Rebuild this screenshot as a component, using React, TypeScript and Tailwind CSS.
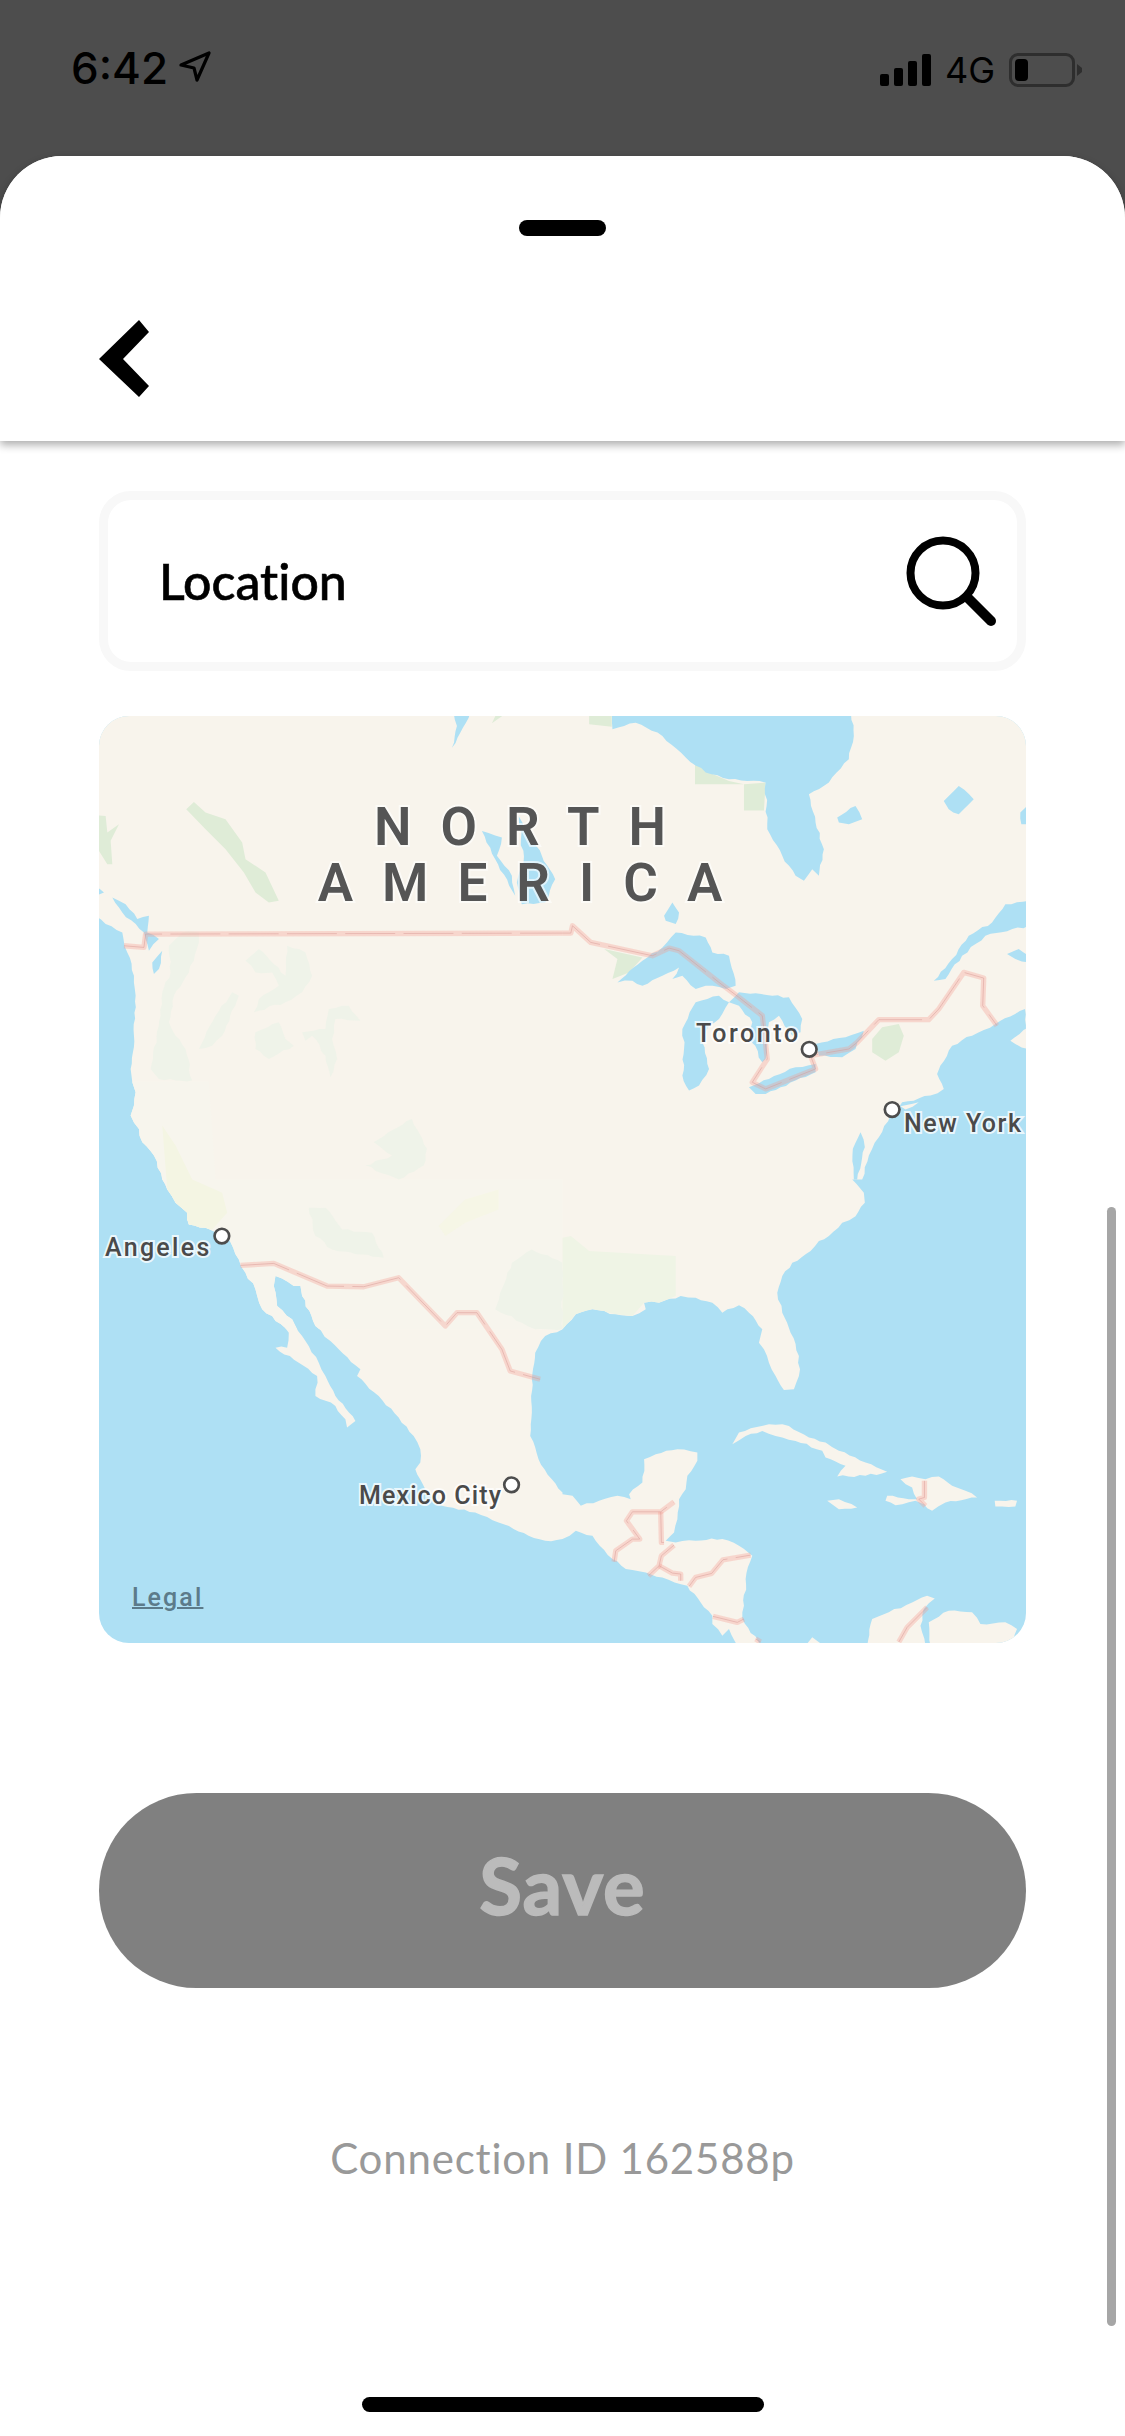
import React from "react";

const OFF: Record<string, [number, number]> = { a: [0, 0], b: [1392, 0], c: [0, 1392], d: [1392, 1392] };
const q = (k: string, s: string) =>
  s
    .trim()
    .split(/\s+/)
    .map((p) => {
      const [x, y] = p.split(",").map(Number);
      return `${x + OFF[k][0]},${y + OFF[k][1]}`;
    })
    .join(" ");

/* serrates a coastline a little, the way the low-zoom map tiles look */
const jag = (s: string) => {
  const pts = s
    .trim()
    .split(/\s+/)
    .map((p) => p.split(",").map(Number));
  const out: string[] = [];
  let seed = 7;
  const rnd = () => {
    seed = (seed * 9301 + 49297) % 233280;
    return seed / 233280 - 0.5;
  };
  pts.forEach((p, i) => {
    const n = pts[(i + 1) % pts.length];
    out.push(`${p[0]},${p[1]}`);
    const dx = n[0] - p[0];
    const dy = n[1] - p[1];
    const len = Math.hypot(dx, dy);
    if (len > 2000) return;
    const steps = Math.floor(len / 16);
    for (let t = 1; t < steps; t++) {
      const f = t / steps;
      const o = rnd() * 7;
      out.push(`${(p[0] + dx * f - (dy / len) * o).toFixed(1)},${(p[1] + dy * f + (dx / len) * o).toFixed(1)}`);
    }
  });
  return out.join(" ");
};

const LAND = jag(
  [
    "-30,-30 2820,-30 2820,1947",
    q("b", "1389,880 1300,925 1230,960 1170,990 1135,1050 1125,1075 1145,1120 1105,1140 1020,1160 985,1200 950,1265 920,1320 900,1392"),
    q("d", "870,0 905,40 908,70 880,110 840,130 800,170 770,185 745,215 690,250 660,290 645,340 660,400 685,460 710,530 710,590 695,630 665,632 640,590 620,550 605,510 590,490 600,450 560,400 530,378 480,400 450,370 400,355 355,350 290,370 245,370 250,390 210,410 160,405 90,390 40,405 0,450"),
    q("c", "1340,470 1310,520 1300,600 1300,700 1295,770 1320,840 1360,900 1392,940"),
    q("d", "0,945 30,950 55,980 110,965 165,950 205,960 200,945 240,910 245,840 280,825 345,810 405,820 405,845 375,890 370,930 350,960 345,1020 335,1060 310,1085 340,1090 400,1085 480,1080 530,1100 570,1130 550,1200 545,1280 540,1320 595,1400 525,1400 500,1350 480,1370 450,1335 450,1310 415,1270 375,1220 300,1195 250,1180 190,1170 150,1140 90,1070 40,1055 0,1080"),
    q("c", "1340,1085 1290,1070 1200,1030 1130,1000 1030,980 980,930 950,870 965,850 965,810 945,770 900,715 840,650 775,590 785,570 720,510 695,485 650,440 610,350 605,320 585,320 530,290 525,320 535,380 580,420 610,470 660,550 680,590 710,650 770,725 745,745 740,720 710,680 650,650 655,590 600,550 530,505 565,505 570,460 520,410 490,390 470,330 440,280 420,240 385,170 320,145 270,135 265,100 230,70 205,30 190,0"),
    q("a", "165,1320 130,1280 120,1240 95,1200 105,1170 110,1130 100,1100 95,1060 105,960 110,840 105,780 85,710 70,650 20,625 -30,590"),
  ].join(" ")
);

const ISLANDS = [
  q("d", "510,795 530,760 620,735 680,740 740,775 790,790 830,815 910,850 975,878 910,890 825,892 850,860 790,835 780,815 700,785 640,770 600,755 550,770"),
  q("d", "1015,900 1050,892 1090,900 1130,892 1170,920 1210,935 1245,955 1150,970 1110,995 1085,975 1060,965 1000,978 970,965 975,950 1040,960 1065,960 1050,925"),
  q("d", "795,965 830,960 885,985 830,990"),
  q("d", "1298,965 1365,965 1360,982 1300,982"),
  q("d", "915,1400 930,1320 980,1300 1050,1270 1095,1250 1118,1258 1085,1290 1075,1340 1090,1400"),
  q("d", "1100,1330 1160,1295 1230,1300 1255,1335 1330,1330 1365,1350 1350,1400 1105,1400"),
  q("d", "730,1400 750,1375 785,1400"),
  q("b", "1345,975 1400,935 1400,1000 1360,985"),
  q("b", "1015,1172 1070,1160 1030,1182"),
].map(jag);

const WATER = [
  q("b", "150,40 220,20 300,60 370,125 430,170 500,190 610,200 615,340 660,420 700,480 725,495 750,460 770,480 785,400 760,320 740,235 800,200 860,130 875,60 865,-20 150,-20"),
  q("b", "1400,555 1330,565 1290,620 1220,660 1170,730 1115,795 1150,790 1200,720 1270,660 1400,630"),
  q("b", "875,1392 872,1300 895,1250 908,1295 885,1392"),
  q("b", "165,800 240,735 300,695 340,650 430,665 450,710 500,720 520,810 490,820 430,810 400,820 360,780 330,790 350,755 300,780 240,810 210,795"),
  q("b", "360,940 400,860 470,840 500,860 470,910 440,930 420,980 440,1060 410,1110 380,1125 360,1080 365,1000"),
  q("b", "530,830 680,845 720,910 715,950 690,960 650,900 620,920 610,1030 600,1040 560,960 570,920 530,870 500,860"),
  q("b", "560,1115 620,1090 700,1055 760,1045 760,1070 700,1095 610,1135 580,1135"),
  q("b", "760,985 850,965 905,945 880,1000 840,1025 770,1020"),
  q("b", "305,600 330,560 350,590 340,625 310,615"),
  q("b", "1145,255 1190,210 1235,250 1190,295 1160,280"),
  q("b", "825,305 880,270 900,310 860,325 830,320"),
  q("b", "1375,290 1400,265 1400,325 1378,325"),
  q("b", "1335,715 1370,700 1400,720 1400,740 1360,730"),
  q("a", "1065,-10 1115,-10 1085,50 1060,95 1075,30"),
  q("a", "1150,345 1210,365 1195,420 1240,480 1250,540 1190,430"),
  q("a", "1260,300 1330,420 1370,490 1340,560 1270,565 1255,500 1275,440"),
  q("a", "40,545 80,565 115,610 150,600 145,650 180,670 150,705 135,650 70,590"),
  q("a", "160,740 190,705 180,760 165,775"),
  q("a", "-10,510 15,530 -10,540"),
].map(jag);

const GREEN_STRONG = [
  q("a", "262,280 285,258 320,290 380,310 430,380 440,430 500,470 540,555 510,560 470,530 435,470 380,400 320,340"),
  q("a", "-10,298 20,300 25,350 60,325 35,375 40,445 25,445 -10,390"),
  q("a", "1180,22 1225,-10 1195,-10"),
  q("b", "80,-10 148,-10 148,32 80,25"),
  q("b", "398,135 440,170 500,195 545,205 610,200 605,284 545,284 545,205 398,205"),
  q("b", "125,700 240,725 200,770 150,790 165,730"),
  q("b", "930,970 960,935 1010,925 1025,960 1010,1010 970,1035 930,1010"),
];

const GREEN_PALE = [
  q("a", "210,690 250,650 300,650 300,680 270,770 225,840 210,920 230,960 260,1000 280,1095 230,1095 180,1090 155,1060 185,900 190,830 215,770"),
  q("a", "440,735 480,700 560,780 565,690 620,710 640,780 610,830 560,860 465,890 480,850 540,810 520,770 470,770"),
  q("a", "300,1000 350,900 400,830 420,840 370,960 340,990"),
  q("a", "470,950 540,920 560,970 585,990 510,1030 470,1000"),
  q("a", "610,950 680,940 690,880 750,870 785,915 710,910 700,970 715,1030 695,1085 680,1020 640,960 620,975"),
  q("a", "825,1280 940,1210 985,1300 975,1350 900,1392 800,1350 880,1320"),
  q("c", "630,85 680,85 730,150 820,160 855,235 790,225 700,210 650,170"),
  q("c", "1190,390 1240,250 1300,210 1392,250 1392,450 1310,450 1270,430"),
].map(jag);

const SOUTHWEST = q("a", "100,1098 330,1098 350,1392") + " " + q("c", "370,0 1392,0 1392,450 0,450");
const SOUTH_CENTRAL = q("d", "0,175 25,170 80,215 340,230 340,350 290,370 245,370 210,410 160,405 90,390 40,405 0,450");
const CA_YELLOW = q("a", "190,1230 230,1290 280,1392") + " " + q("c", "370,40 385,100 340,150 270,140 205,30");
const YELLOW_B = q("c", "1020,140 1100,60 1200,30 1200,90 1100,130 1040,170");

const BORDERS = [
  q("a", "75,690 135,695 140,655 1392,652"),
  q("b", "0,652 25,652 30,630 85,680 270,720 320,697 350,705 470,800 530,845 600,900 615,1030 570,1100 610,1120 760,1060 745,1020 860,1000 885,980 950,912 1100,912 1130,880 1205,770 1265,787 1262,870 1305,930"),
  q("c", "425,258 525,252 685,320 795,322 900,295 1040,440 1075,400 1135,400 1210,510 1235,575 1325,600"),
  q("d", "155,1148 160,1115 210,1080 232,1080 192,1025 210,998 295,998 335,968"),
  q("d", "295,998 297,1090 305,1090"),
  q("d", "335,1098 297,1130 290,1160 258,1190"),
  q("d", "290,1160 330,1182 355,1185 355,1205"),
  q("d", "380,1222 400,1195 448,1183 482,1142 565,1128"),
  q("d", "452,1312 525,1330 545,1320"),
  q("d", "1095,1285 1035,1345 1010,1389"),
  q("d", "1087,905 1087,955 1070,960 1090,980"),
  q("d", "580,1380 595,1389"),
];

const PINS: [string, number, number][] = [
  ["b", 741, 1001],
  ["b", 990, 1182],
  ["c", 369, 170],
  ["c", 1239, 917],
];

function MapArt() {
  return (
    <svg viewBox="0 0 2784 2784" className="block w-full h-full">
      <defs>
        <clipPath id="landclip">
          <polygon points={LAND} />
        </clipPath>
      </defs>
      <rect x="0" y="0" width="2784" height="2784" fill="#aee0f4" />
      <polygon points={LAND} fill="#f8f4ec" />
      {ISLANDS.map((p, i) => (
        <polygon key={i} points={p} fill="#f8f4ec" />
      ))}
      <g clipPath="url(#landclip)">
        <polygon points={SOUTHWEST} fill="#f7f5ed" />
        <polygon points={SOUTH_CENTRAL} fill="#eff4e5" />
        <polygon points={CA_YELLOW} fill="#f4f5e3" />
        <polygon points={YELLOW_B} fill="#f6f6e6" />
        {GREEN_PALE.map((p, i) => (
          <polygon key={i} points={p} fill="#eff3e9" />
        ))}
        {GREEN_STRONG.map((p, i) => (
          <polygon key={i} points={p} fill="#dfecd7" />
        ))}
      </g>
      {WATER.map((p, i) => (
        <polygon key={i} points={p} fill="#aee0f4" />
      ))}
      {BORDERS.map((p, i) => (
        <g key={i} fill="none" strokeLinejoin="round">
          <polyline points={p} stroke="#f79c90" strokeOpacity="0.33" strokeWidth="16" />
          <polyline points={p} stroke="#d99a96" strokeOpacity="0.5" strokeWidth="3" strokeDasharray="150 25" />
        </g>
      ))}
      {PINS.map(([k, x, y], i) => (
        <circle key={i} cx={x + OFF[k][0]} cy={y + OFF[k][1]} r="22" fill="#ffffff" stroke="#4d4d4d" strokeWidth="8" />
      ))}
    </svg>
  );
}

const cityLabel =
  "absolute whitespace-nowrap font-['Roboto',sans-serif] font-medium text-[25px] leading-[30px] text-[#4a4a4a] [-webkit-text-stroke:4px_rgba(255,255,255,0.75)] [paint-order:stroke_fill]";

export default function App() {
  return (
    <div className="relative w-[1125px] h-[2436px] overflow-hidden bg-[#4d4d4d] flex flex-col font-['Lato',sans-serif]">
      {/* status bar */}
      <div className="h-[156px] shrink-0 flex items-start justify-between pl-[71px] pr-[43px] pt-[44px] text-black">
        <div className="flex items-center gap-[11px] h-[48px]">
          <span className="font-['Inter',sans-serif] font-medium text-[44px] leading-[48px]">6:42</span>
          <svg width="32" height="32" viewBox="0 0 32 32" fill="none" className="mt-[-2px]">
            <path d="M2 14 L30 2 L18 29 L15 17 Z" stroke="#000" strokeWidth="3.2" strokeLinejoin="round" />
          </svg>
        </div>
        <div className="flex items-center h-[48px]">
          <div className="flex items-end gap-[5px] h-[32px] mt-[4px]">
            <div className="w-[9px] h-[12px] rounded-[2px] bg-black" />
            <div className="w-[9px] h-[18px] rounded-[2px] bg-black" />
            <div className="w-[9px] h-[25px] rounded-[2px] bg-black" />
            <div className="w-[9px] h-[32px] rounded-[2px] bg-black" />
          </div>
          <span className="ml-[14px] font-['Inter',sans-serif] text-[36px] leading-[48px] mt-[4px]">4G</span>
          <div className="ml-[14px] mt-[4px] w-[66px] h-[34px] rounded-[9px] border-[3px] border-[#2e2e2e] p-[3px]">
            <div className="w-[13px] h-full rounded-[4px] bg-black" />
          </div>
          <svg width="5" height="12" viewBox="0 0 5 12" className="ml-[2px] mt-[4px]">
            <path d="M0 0 L5 4 L5 8 L0 12 Z" fill="#2e2e2e" />
          </svg>
        </div>
      </div>

      {/* sheet */}
      <div className="flex-1 bg-white rounded-t-[62px] flex flex-col">
        <div className="h-[285px] shrink-0 rounded-t-[62px] bg-white shadow-[0_4px_8px_rgba(0,0,0,0.32)] flex flex-col pt-[64px] px-[99px]">
          <div className="self-center w-[87px] h-[16px] rounded-full bg-black" />
          <svg width="51" height="78" viewBox="0 0 51 78" className="mt-[84px]">
            <polygon points="0,39 40,0 50,12 24,39 50,66 40,77" fill="#000" />
          </svg>
        </div>

        <div className="flex flex-col px-[99px] pt-[50px]">
          <div className="h-[180px] rounded-[32px] border-[9px] border-[#f8f8f8] flex items-center justify-between pl-[51px] pr-[18px]">
            <span className="text-[50px] font-medium text-black leading-none [font-variant-ligatures:none] [-webkit-text-stroke:0.6px_#000]">
              Location
            </span>
            <svg width="94" height="94" viewBox="0 0 94 94" fill="none" className="mt-[1px]">
              <circle cx="38" cy="38" r="32.5" stroke="#000" strokeWidth="8" />
              <path d="M62 62 L86 86" stroke="#000" strokeWidth="10" strokeLinecap="round" />
            </svg>
          </div>

          <div className="relative mt-[45px] h-[927px] rounded-[30px] overflow-hidden">
            <MapArt />
            <div className="absolute left-0 top-[83px] w-[871px] text-center font-['Roboto',sans-serif] font-semibold text-[53px] leading-[56px] tracking-[29px] text-[#555555] [-webkit-text-stroke:4px_rgba(255,255,255,0.6)] [paint-order:stroke_fill]">
              <div>NORTH</div>
              <div>AMERICA</div>
            </div>
            <div className={`${cityLabel} tracking-[2.6px] left-[597px] top-[303px]`}>Toronto</div>
            <div className={`${cityLabel} tracking-[1.5px] left-[805px] top-[393px]`}>New York</div>
            <div className={`${cityLabel} tracking-[2.3px] left-[6px] top-[517px]`}>Angeles</div>
            <div className={`${cityLabel} tracking-[1.1px] left-[260px] top-[765px]`}>Mexico City</div>
            <div className="absolute left-[33px] top-[867px] font-['Roboto',sans-serif] font-medium text-[25px] leading-[30px] tracking-[2.1px] underline decoration-2 text-[#5c7b8a]">
              Legal
            </div>
          </div>

          <div className="mt-[150px] h-[195px] rounded-full bg-[#808080] flex items-center justify-center">
            <span className="text-[78px] font-bold leading-none tracking-[1px] text-[#bbbbbb] mt-[-12px] [-webkit-text-stroke:1.5px_#bbbbbb]">
              Save
            </span>
          </div>

          <div className="mt-[145px] h-[50px] flex items-center justify-center">
            <span className="text-[42px] leading-[50px] text-[#999999] tracking-[0.8px]">Connection ID 162588p</span>
          </div>
        </div>
      </div>

      {/* scroll indicator */}
      <div className="absolute left-[1107px] top-[1207px] w-[9px] h-[1119px] rounded-full bg-[#a6a6a6]" />
      {/* home indicator */}
      <div className="absolute left-[362px] top-[2397px] w-[402px] h-[15px] rounded-full bg-black" />
    </div>
  );
}
